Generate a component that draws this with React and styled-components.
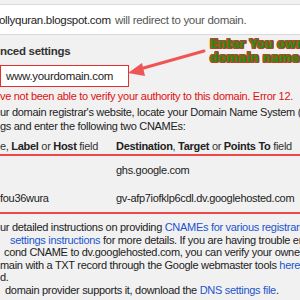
import React from 'react';
import styled, { createGlobalStyle } from 'styled-components';

const Global = createGlobalStyle`
  html, body { margin: 0; padding: 0; background: #f1f1f1; }
`;

const Page = styled.div`
  position: relative;
  width: 300px;
  height: 300px;
  overflow: hidden;
  background: #f1f1f1;
  font-family: "Liberation Sans", Arial, sans-serif;
  font-size: 11px;
  letter-spacing: -0.3px;
  color: #222;
`;

const TopBox = styled.div`
  margin-top: 4px;
  height: 29px;
  background: #fff;
  border-top: 1px solid #d9d9d9;
  border-bottom: 1px solid #d9d9d9;
  display: flex;
  align-items: center;
  white-space: nowrap;
  font-size: 11.5px;
`;

const Blog = styled.span`
  margin-left: -1px;
  width: 116px;
  color: #222;
`;

const Redirect = styled.span`
  color: #555;
`;

const Heading = styled.div`
  margin-top: 8px;
  line-height: 16px;
  font-weight: bold;
  font-size: 11.5px;
  color: #333;
`;

const Input = styled.div`
  margin-top: 6px;
  width: 122px;
  height: 20px;
  border: 1px solid #e53030;
  background: #fff;
  display: flex;
  align-items: center;
  padding-left: 5px;
  font-size: 11.5px;
`;

const Error = styled.div`
  margin-top: 2px;
  line-height: 14px;
  color: #dd1111;
  white-space: nowrap;
`;

const Para = styled.div`
  margin-top: ${p => p.$top}px;
  line-height: ${p => p.$lh}px;
  white-space: nowrap;
`;

const Line = styled.div`
  padding-left: ${p => p.$indent || 0}px;
`;

const Link = styled.span`
  color: #2255cc;
`;

const Table = styled.div`
  margin-top: 6px;
  display: grid;
  grid-template-columns: 116px 1fr;
  white-space: nowrap;
`;

const HeadRow = styled.div`
  display: contents;
`;

const HeadCell = styled.div`
  height: 15px;
  line-height: 14px;
  border-bottom: 2px solid #ec4a4a;
  color: #333;
  b { color: #222; }
`;

const Cell = styled.div`
  height: 28px;
  display: flex;
  align-items: center;
  border-bottom: ${p => (p.$last ? '2px solid #ec4a4a' : 'none')};
`;

const Note = styled.div`
  position: absolute;
  left: 210px;
  top: 37px;
  font-family: "DejaVu Sans", Verdana, sans-serif;
  font-weight: bold;
  font-size: 12px;
  letter-spacing: -0.2px;
  line-height: 14px;
  color: #2f8a12;
  white-space: nowrap;
  text-shadow:
    1px 0 0 #b0452a, -1px 0 0 #b0452a, 0 1px 0 #b0452a, 0 -1px 0 #b0452a,
    1px 1px 0 #b0452a, -1px -1px 0 #b0452a, 1px -1px 0 #b0452a, -1px 1px 0 #b0452a;
`;

const Arrow = styled.svg`
  position: absolute;
  left: 0;
  top: 0;
`;

export default function App() {
  return (
    <>
      <Global />
      <Page>
        <TopBox>
          <Blog>ollyquran.blogspot.com</Blog>
          <Redirect>will redirect to your domain.</Redirect>
        </TopBox>
        <Heading>nced settings</Heading>
        <Input>www.yourdomain.com</Input>
        <Error>ve not been able to verify your authority to this domain. Error 12.</Error>
        <Para $top={2} $lh={14}>
          <Line>ur domain registrar's website, locate your Domain Name System (</Line>
          <Line>gs and enter the following two CNAMEs:</Line>
        </Para>
        <Table>
          <HeadRow>
            <HeadCell>e, <b>Label</b> or <b>Host</b> field</HeadCell>
            <HeadCell><b>Destination</b>, <b>Target</b> or <b>Points To</b> field</HeadCell>
          </HeadRow>
          <Cell />
          <Cell>ghs.google.com</Cell>
          <Cell $last>fou36wura</Cell>
          <Cell $last>gv-afp7iofklp6cdl.dv.googlehosted.com</Cell>
        </Table>
        <Para $top={7} $lh={12.5}>
          <Line>ur detailed instructions on providing <Link>CNAMEs for various registrars</Link></Line>
          <Line $indent={10}><Link>settings instructions</Link> for more details. If you are having trouble ent</Line>
          <Line $indent={4}>cond CNAME to dv.googlehosted.com, you can verify your owners</Line>
          <Line>main with a TXT record through the Google webmaster tools <Link>here</Link></Line>
          <Line>d.</Line>
          <Line $indent={5}>domain provider supports it, download the <Link>DNS settings file</Link>.</Line>
        </Para>
        <Arrow width="300" height="300" viewBox="0 0 300 300">
          <line x1="204" y1="51" x2="140" y2="69" stroke="#f05555" strokeWidth="3" strokeLinecap="round" />
          <polygon points="128,73 142,63 145,76" fill="#f05555" />
        </Arrow>
        <Note>
          Enter You own<br />domain name
        </Note>
      </Page>
    </>
  );
}
